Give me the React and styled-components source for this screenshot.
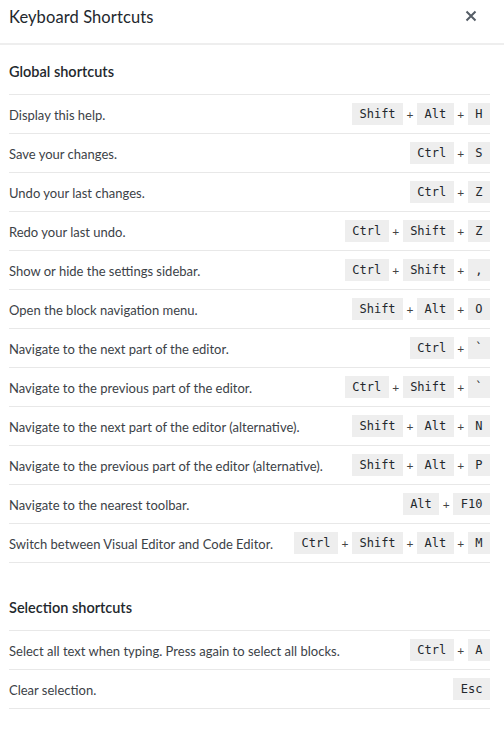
import React from "react";
import styled, { createGlobalStyle } from "styled-components";

const GlobalStyle = createGlobalStyle`
  body {
    margin: 0;
    background: #fff;
    font-family: Lato, "Noto Sans", sans-serif;
    color: #333;
  }
`;

const Modal = styled.div`
  width: 504px;
  min-height: 733px;
  background: #fff;
`;

const Header = styled.div`
  display: flex;
  align-items: flex-start;
  justify-content: space-between;
  height: 37px;
  padding: 6px 21px 0 9px;
  border-bottom: 2px solid #eeeeee;
`;

const Title = styled.h1`
  margin: 0;
  font-size: 16.5px;
  line-height: 22px;
  font-weight: 400;
  color: #23282d;
  letter-spacing: 0.1px;
`;

const CloseButton = styled.button`
  display: flex;
  align-items: center;
  justify-content: center;
  width: 24px;
  height: 20px;
  padding: 0;
  border: 0;
  background: none;
  color: #555d66;
  cursor: pointer;
`;

const Body = styled.div`
  padding: 0 14px 0 9px;
`;

const Section = styled.section`
  padding-top: 17px;
  & + & {
    padding-top: 35px;
  }
`;

const SectionTitle = styled.h2`
  margin: 0 0 12px;
  height: 20px;
  line-height: 20px;
  font-size: 14.5px;
  font-weight: 600;
  color: #23282d;
`;

const List = styled.ul`
  list-style: none;
  margin: 0;
  padding: 0;
`;

const Row = styled.li`
  display: flex;
  align-items: center;
  justify-content: space-between;
  height: 38px;
  border-top: 1px solid #e8e8e8;
  &:last-child {
    border-bottom: 1px solid #e8e8e8;
  }
`;

const Description = styled.span`
  font-size: 13px;
  color: #3c4247;
  padding-top: 1px;
`;

const Combo = styled.span`
  display: flex;
  align-items: center;
`;

const Key = styled.kbd`
  display: inline-block;
  height: 22px;
  line-height: 22px;
  padding: 0 7.5px;
  background: #eeeeee;
  font-family: "DejaVu Sans Mono", "Liberation Mono", monospace;
  font-size: 12px;
  color: #23282d;
`;

const Plus = styled.span`
  width: 14px;
  text-align: center;
  font-size: 12px;
  color: #444;
`;

const sections = [
  {
    title: "Global shortcuts",
    items: [
      ["Display this help.", ["Shift", "Alt", "H"]],
      ["Save your changes.", ["Ctrl", "S"]],
      ["Undo your last changes.", ["Ctrl", "Z"]],
      ["Redo your last undo.", ["Ctrl", "Shift", "Z"]],
      ["Show or hide the settings sidebar.", ["Ctrl", "Shift", ","]],
      ["Open the block navigation menu.", ["Shift", "Alt", "O"]],
      ["Navigate to the next part of the editor.", ["Ctrl", "`"]],
      ["Navigate to the previous part of the editor.", ["Ctrl", "Shift", "`"]],
      ["Navigate to the next part of the editor (alternative).", ["Shift", "Alt", "N"]],
      ["Navigate to the previous part of the editor (alternative).", ["Shift", "Alt", "P"]],
      ["Navigate to the nearest toolbar.", ["Alt", "F10"]],
      ["Switch between Visual Editor and Code Editor.", ["Ctrl", "Shift", "Alt", "M"]],
    ],
  },
  {
    title: "Selection shortcuts",
    items: [
      ["Select all text when typing. Press again to select all blocks.", ["Ctrl", "A"]],
      ["Clear selection.", ["Esc"]],
    ],
  },
];

const CloseIcon = () => (
  <svg width="12" height="12" viewBox="0 0 12 12">
    <path d="M1.5 1.5 L10.5 10.5 M10.5 1.5 L1.5 10.5" stroke="currentColor" strokeWidth="2" />
  </svg>
);

export default function App() {
  return (
    <Modal>
      <GlobalStyle />
      <Header>
        <Title>Keyboard Shortcuts</Title>
        <CloseButton aria-label="Close">
          <CloseIcon />
        </CloseButton>
      </Header>
      <Body>
        {sections.map((section) => (
          <Section key={section.title}>
            <SectionTitle>{section.title}</SectionTitle>
            <List>
              {section.items.map(([label, keys]) => (
                <Row key={label}>
                  <Description>{label}</Description>
                  <Combo>
                    {keys.map((k, i) => (
                      <React.Fragment key={i}>
                        {i > 0 && <Plus>+</Plus>}
                        <Key>{k}</Key>
                      </React.Fragment>
                    ))}
                  </Combo>
                </Row>
              ))}
            </List>
          </Section>
        ))}
      </Body>
    </Modal>
  );
}
